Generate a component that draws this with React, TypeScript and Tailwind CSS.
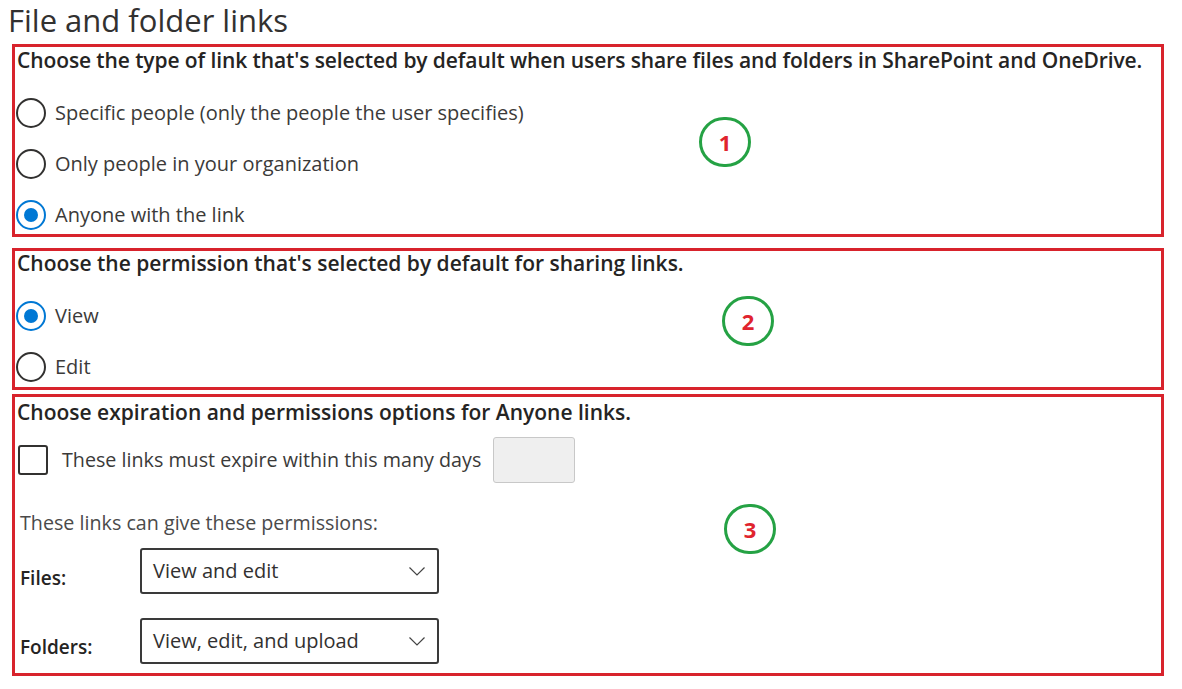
import { useState } from "react";

const font = { fontFamily: '"Open Sans", "Noto Sans", Arial, sans-serif' };

function Radio({ checked, label }: { checked?: boolean; label: string }) {
  return (
    <div className="flex items-center h-[32px] gap-[9px] pl-[1px]">
      {checked ? (
        <span className="flex items-center justify-center w-[30px] h-[30px] rounded-full border-[2.5px] border-[#0078d4]">
          <span className="w-[14px] h-[14px] rounded-full bg-[#0078d4]" />
        </span>
      ) : (
        <span className="w-[30px] h-[30px] rounded-full border-2 border-[#323130]" />
      )}
      <span className="text-[20px] text-[#3b3a39]">{label}</span>
    </div>
  );
}

function Marker({ n, className }: { n: string; className: string }) {
  return (
    <div
      className={`absolute w-[52px] h-[50px] rounded-full border-[3px] border-[#25a244] flex items-center justify-center ${className}`}
    >
      <span className="text-[22px] font-bold text-[#e0242e] leading-none">{n}</span>
    </div>
  );
}

function Select({ value }: { value: string }) {
  return (
    <div className="w-[299px] h-[46px] border-2 border-[#3a3a3a] rounded-[3px] flex items-center justify-between pl-[11px] pr-[12px]">
      <span className="text-[20px] text-[#323130]">{value}</span>
      <svg width="16" height="9" viewBox="0 0 16 9" fill="none">
        <polyline points="0.5,0.5 8,8 15.5,0.5" stroke="#444" strokeWidth="1.2" />
      </svg>
    </div>
  );
}

export default function App() {
  const [days] = useState("");
  return (
    <div className="w-[1182px] h-[689px] bg-white text-[#323130] overflow-hidden" style={font}>
      <h1 className="pl-[8px] h-[44px] text-[31px] leading-[40px] text-[#323130]">
        File and folder links
      </h1>

      <div className="ml-[12px] w-[1152px] flex flex-col">
        <section className="relative h-[193px] border-[3px] border-[#d8232c]">
          <div className="h-[28px] flex items-center pl-[2px] text-[21px] font-semibold text-[#252423] whitespace-nowrap tracking-[-0.1px]">
            Choose the type of link that's selected by default when users share files and folders in SharePoint and OneDrive.
          </div>
          <div className="mt-[22px] flex flex-col gap-[19px]">
            <Radio label="Specific people (only the people the user specifies)" />
            <Radio label="Only people in your organization" />
            <Radio checked label="Anyone with the link" />
          </div>
          <Marker n="1" className="left-[684px] top-[70px]" />
        </section>

        <section className="relative mt-[11px] h-[142px] border-[3px] border-[#d8232c]">
          <div className="h-[26px] flex items-center pl-[2px] text-[21px] font-semibold text-[#252423]">
            Choose the permission that's selected by default for sharing links.
          </div>
          <div className="mt-[23px] flex flex-col gap-[19px]">
            <Radio checked label="View" />
            <Radio label="Edit" />
          </div>
          <Marker n="2" className="left-[707px] top-[45px]" />
        </section>

        <section className="relative mt-[4px] h-[282px] border-[3px] border-[#d8232c]">
          <div className="h-[32px] flex items-center pl-[2px] text-[21px] font-semibold text-[#252423]">
            Choose expiration and permissions options for Anyone links.
          </div>
          <div className="mt-[8px] h-[46px] flex items-center">
            <span className="ml-[3px] w-[30px] h-[30px] rounded-[3px] border-2 border-[#323130]" />
            <span className="ml-[14px] text-[19.7px] text-[#3b3a39]">
              These links must expire within this many days
            </span>
            <div className="ml-[12px] w-[82px] h-[46px] rounded-[3px] border border-[#c8c8c8] bg-[#efefef]">
              {days}
            </div>
          </div>
          <div className="mt-[27px] h-[26px] flex items-center pl-[5px] text-[19.7px] text-[#4a4a4a]">
            These links can give these permissions:
          </div>
          <div className="mt-[12px] flex flex-col gap-[24px]">
            <div className="flex items-center">
              <span className="w-[125px] pl-[5px] pt-[14px] text-[19px] font-semibold text-[#252423]">Files:</span>
              <Select value="View and edit" />
            </div>
            <div className="flex items-center">
              <span className="w-[125px] pl-[5px] pt-[12px] text-[19px] font-semibold text-[#252423]">Folders:</span>
              <Select value="View, edit, and upload" />
            </div>
          </div>
          <Marker n="3" className="left-[709px] top-[107px]" />
        </section>
      </div>
    </div>
  );
}
